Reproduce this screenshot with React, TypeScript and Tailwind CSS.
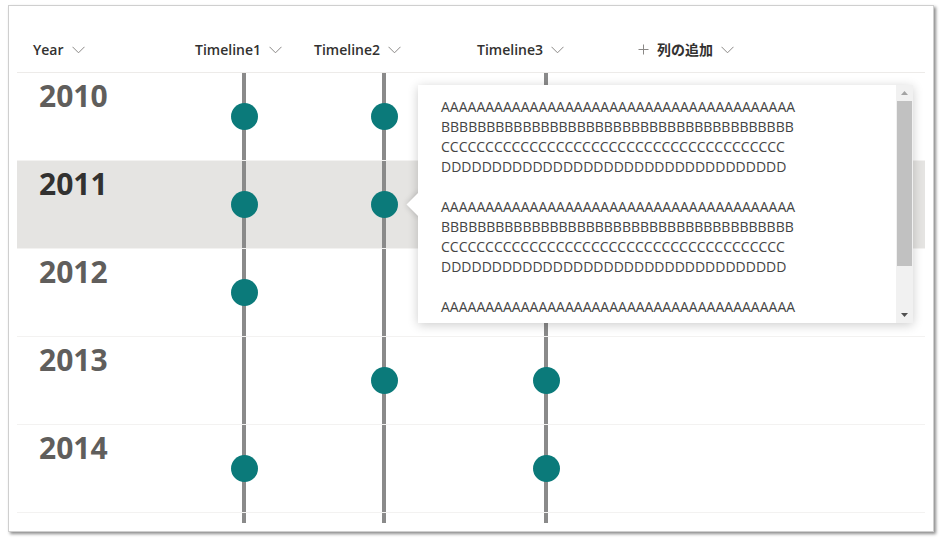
import React from "react";

type Row = { year: string; dots: [boolean, boolean, boolean] };

const rows: Row[] = [
  { year: "2010", dots: [true, true, false] },
  { year: "2011", dots: [true, true, false] },
  { year: "2012", dots: [true, false, false] },
  { year: "2013", dots: [false, true, true] },
  { year: "2014", dots: [true, false, true] },
];

const font = { fontFamily: '"Open Sans", "Noto Sans CJK JP", sans-serif' };

const A = "A".repeat(40);
const B = "B".repeat(39);
const C = "C".repeat(39);
const D = "D".repeat(34);
// only what fits in the callout before it scrolls
const lines = [A, B, C, D, "", A, B, C, D, "", A];

function Chevron() {
  return (
    <svg width="13" height="8" viewBox="0 0 13 8" className="shrink-0">
      <path d="M0.5 0.8 L6.5 6.8 L12.5 0.8" fill="none" stroke="#8a8886" strokeWidth="1" />
    </svg>
  );
}

function Head({ label, pad }: { label: string; pad: string }) {
  return (
    <div className={`flex items-center gap-[8px] ${pad}`}>
      <span>{label}</span>
      <Chevron />
    </div>
  );
}

function Cell({ dot }: { dot: boolean }) {
  return (
    <div className="relative flex h-full items-center justify-center">
      <div className="absolute inset-y-0 left-1/2 w-[4px] -translate-x-1/2 bg-[#8a8a8a]" />
      {dot && <div className="relative h-[27px] w-[27px] rounded-full bg-[#0b7a7a]" />}
    </div>
  );
}

export default function App() {
  const cols = "grid grid-cols-[170px_114px_166px_158px_1fr]";
  return (
    <div className="h-[542px] w-[943px] bg-white pl-[8px] pt-[5px]" style={font}>
      <div className="relative h-[527px] w-[926px] overflow-hidden border border-[#cfcfcf] bg-white shadow-[2px_2px_3px_rgba(0,0,0,0.45)]">
        <div className="pl-[8px] pr-[8px] pt-[21px]">
          {/* header */}
          <div className={`${cols} h-[46px] items-center border-b border-[#edebe9] text-[14px] font-semibold text-[#323130]`}>
            <Head label="Year" pad="pl-[16px]" />
            <Head label="Timeline1" pad="pl-[8px]" />
            <Head label="Timeline2" pad="pl-[13px]" />
            <Head label="Timeline3" pad="pl-[10px]" />
            <div className="flex items-center gap-[8px] pl-[13px]">
              <svg width="11" height="11" viewBox="0 0 11 11">
                <path d="M5.5 0.5 V10.5 M0.5 5.5 H10.5" stroke="#8a8886" strokeWidth="1" />
              </svg>
              <span>列の追加</span>
              <Chevron />
            </div>
          </div>

          {/* rows */}
          <div className="h-[450px] overflow-hidden">
            {rows.map((r) => {
              const sel = r.year === "2011";
              return (
                <div
                  key={r.year}
                  className={`${cols} h-[88px] border-b border-[#f3f2f1] ${sel ? "bg-[#e5e4e2]" : ""}`}
                >
                  <div
                    className={`pl-[22px] pt-[5px] text-[30px] font-bold leading-[36px] ${
                      sel ? "text-[#323130]" : "text-[#605e5c]"
                    }`}
                  >
                    {r.year}
                  </div>
                  {r.dots.map((d, i) => (
                    <Cell key={i} dot={d} />
                  ))}
                  <div />
                </div>
              );
            })}
            <div className={`${cols} h-[88px]`}>
              <div />
              <Cell dot={false} />
              <Cell dot={false} />
              <Cell dot={false} />
              <div />
            </div>
          </div>
        </div>

        {/* callout */}
        <div className="absolute left-[409px] top-[79px] h-[238px] w-[495px] shadow-[0_2px_10px_rgba(0,0,0,0.2)]">
          <div className="absolute left-[-8px] top-[111px] h-[17px] w-[17px] rotate-45 bg-white shadow-[0_0_6px_rgba(0,0,0,0.2)]" />
          <div className="relative flex h-full bg-white">
            <div className="flex-1 overflow-hidden pl-[23px] pt-[12px] text-[14px] leading-[20px] text-[#444444]">
              {lines.map((l, i) => (
                <div key={i} className="h-[20px] whitespace-nowrap">
                  {l}
                </div>
              ))}
            </div>
            <div className="flex w-[17px] flex-col bg-[#f1f1f1]">
              <div className="flex h-[16px] items-center justify-center">
                <svg width="7" height="4" viewBox="0 0 7 4">
                  <path d="M0 4 L3.5 0 L7 4 Z" fill="#a3a3a3" />
                </svg>
              </div>
              <div className="mx-[1px] h-[165px] bg-[#c1c1c1]" />
              <div className="flex-1" />
              <div className="flex h-[16px] items-center justify-center">
                <svg width="7" height="4" viewBox="0 0 7 4">
                  <path d="M0 0 L3.5 4 L7 0 Z" fill="#505050" />
                </svg>
              </div>
            </div>
          </div>
        </div>
      </div>
    </div>
  );
}
